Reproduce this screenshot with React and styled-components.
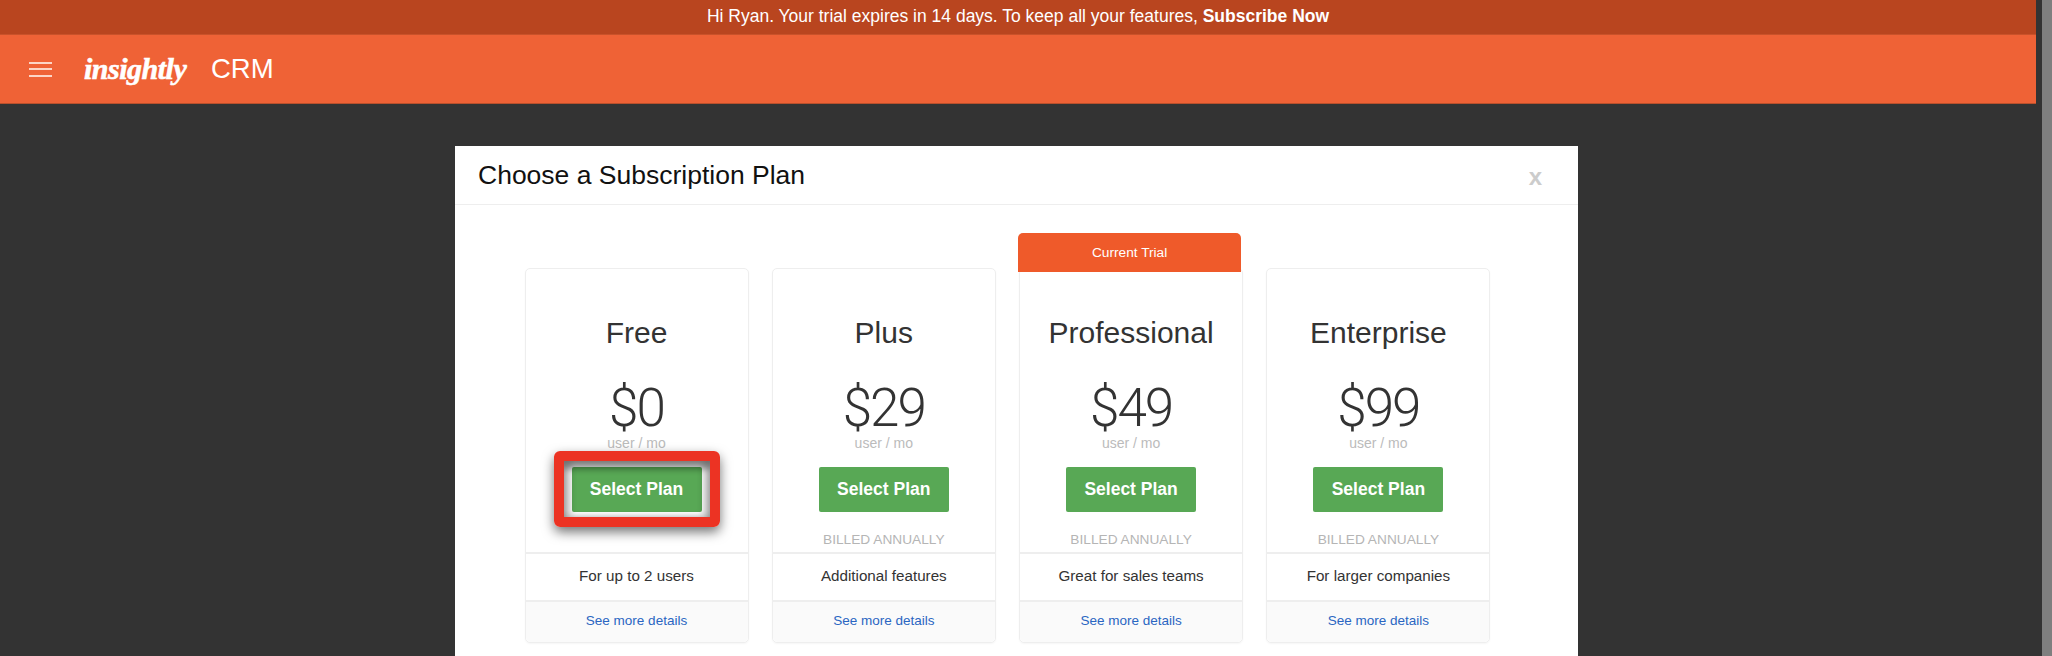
import React from "react";
import styled, { createGlobalStyle } from "styled-components";

const plans = [
  { name: "Free", price: "$0", blurb: "For up to 2 users", highlight: true },
  { name: "Plus", price: "$29", billed: true, blurb: "Additional features" },
  { name: "Professional", price: "$49", billed: true, blurb: "Great for sales teams", current: true },
  { name: "Enterprise", price: "$99", billed: true, blurb: "For larger companies" },
];

const App = () => {
  return (
    <Page>
      <GlobalStyle />
      <Main>
        <Banner>
          Hi Ryan. Your trial expires in 14 days. To keep all your features, <b>Subscribe Now</b>
        </Banner>
        <Nav>
          <Burger>
            <span />
            <span />
            <span />
          </Burger>
          <Logo>insightly</Logo>
          <Product>CRM</Product>
        </Nav>
        <Modal>
          <ModalHeader>
            <Title>Choose a Subscription Plan</Title>
            <Close>x</Close>
          </ModalHeader>
          <Plans>
            {plans.map((plan) => (
              <Card key={plan.name}>
                {plan.current && <Badge>Current Trial</Badge>}
                <CardTop>
                  <PlanName>{plan.name}</PlanName>
                  <Price>{plan.price}</Price>
                  <Unit>user / mo</Unit>
                  <ButtonWrap>
                    <SelectButton>Select Plan</SelectButton>
                    {plan.highlight && <Highlight />}
                  </ButtonWrap>
                  <Billed>{plan.billed ? "BILLED ANNUALLY" : ""}</Billed>
                </CardTop>
                <Blurb>{plan.blurb}</Blurb>
                <Details>See more details</Details>
              </Card>
            ))}
          </Plans>
        </Modal>
      </Main>
      <Gutter />
      <Scrollbar />
    </Page>
  );
};

export default App;

const GlobalStyle = createGlobalStyle`
  html, body {
    margin: 0;
    height: 100%;
    overflow: hidden;
    background: #333333;
    font-family: "Liberation Sans", Arial, sans-serif;
  }
`;

const Page = styled.div`
  display: flex;
  height: 656px;
  overflow: hidden;
`;

const Main = styled.div`
  flex: 1;
  min-width: 0;
`;

const Gutter = styled.div`
  width: 6px;
  background: #333333;
`;

const Scrollbar = styled.div`
  width: 10px;
  background: #7f7f7f;
`;

const Banner = styled.div`
  height: 35px;
  box-sizing: border-box;
  background: #b9451f;
  border-bottom: 1px solid #c9522a;
  color: #fff;
  font-size: 17.5px;
  line-height: 33px;
  text-align: center;
  white-space: nowrap;
`;

const Nav = styled.div`
  height: 69px;
  box-sizing: border-box;
  background: #ef6236;
  border-bottom: 1px solid #b9502c;
  display: flex;
  align-items: center;
  padding-left: 29px;
`;

const Burger = styled.div`
  width: 23px;
  display: flex;
  flex-direction: column;
  gap: 4.5px;

  span {
    height: 2px;
    background: #fcd5c6;
  }
`;

const Logo = styled.div`
  margin-left: 32px;
  width: 127px;
  color: #fff;
  font-family: "Liberation Serif", serif;
  font-style: italic;
  font-weight: 700;
  font-size: 30px;
  letter-spacing: -0.5px;
  -webkit-text-stroke: 0.6px #fff;
`;

const Product = styled.div`
  color: #fff;
  font-size: 27.5px;
`;

const Modal = styled.div`
  margin: 42px 0 0 455px;
  width: 1123px;
  background: #fff;
`;

const ModalHeader = styled.div`
  height: 58px;
  border-bottom: 1px solid #eeeeee;
  display: flex;
  align-items: center;
  justify-content: space-between;
  padding: 0 36px 0 23px;
`;

const Title = styled.div`
  font-size: 26.5px;
  color: #111;
`;

const Close = styled.div`
  font-size: 24px;
  font-weight: 700;
  color: #cccccc;
  margin-top: 4px;
`;

const Plans = styled.div`
  display: flex;
  gap: 23.3px;
  padding: 63px 0 40px 69.5px;
`;

const Card = styled.div`
  position: relative;
  width: 224px;
  height: 375px;
  box-sizing: border-box;
  border: 1px solid #eeeeee;
  border-radius: 5px;
  box-shadow: 0 1px 2px rgba(0, 0, 0, 0.04);
  display: flex;
  flex-direction: column;
`;

const Badge = styled.div`
  position: absolute;
  left: -2px;
  right: 1px;
  top: -36px;
  height: 39px;
  background: #ef5a2a;
  border-radius: 5px 5px 0 0;
  color: #fff;
  font-size: 13.7px;
  line-height: 39px;
  text-align: center;
`;

const CardTop = styled.div`
  height: 283px;
  box-sizing: border-box;
  padding-top: 44px;
  text-align: center;
`;

const PlanName = styled.div`
  font-size: 30px;
  line-height: 40px;
  color: #333;
`;

const Price = styled.div`
  margin-top: 30px;
  font-family: Roboto, "Liberation Sans", sans-serif;
  font-weight: 300;
  font-size: 53px;
  line-height: 50px;
  letter-spacing: -2px;
  color: #333;
`;

const Unit = styled.div`
  font-size: 14px;
  line-height: 20px;
  color: #bbbbbb;
`;

const ButtonWrap = styled.div`
  position: relative;
  width: 130px;
  margin: 14px auto 0;
`;

const SelectButton = styled.button`
  display: block;
  width: 130px;
  height: 45px;
  border: none;
  border-radius: 2px;
  background: #58a855;
  color: #fff;
  font-family: inherit;
  font-size: 17.5px;
  font-weight: 700;
`;

const Highlight = styled.div`
  position: absolute;
  inset: -16px -18px -15px -18px;
  border: 10px solid #ec3323;
  border-radius: 6px;
  box-shadow: 0 5px 12px rgba(0, 0, 0, 0.55), inset 0 8px 6px rgba(0, 0, 0, 0.4),
    inset 7px 0 6px rgba(0, 0, 0, 0.2), inset -7px 0 6px rgba(0, 0, 0, 0.2);
`;

const Billed = styled.div`
  margin-top: 18px;
  font-size: 13.7px;
  line-height: 20px;
  color: #b5b5b5;
`;

const Blurb = styled.div`
  height: 48px;
  box-sizing: border-box;
  border-top: 2px solid #eeeeee;
  font-size: 15.2px;
  line-height: 44px;
  text-align: center;
  color: #333;
`;

const Details = styled.div`
  flex: 1;
  border-top: 2px solid #eeeeee;
  border-radius: 0 0 5px 5px;
  background: #fafafa;
  font-size: 13.5px;
  line-height: 38px;
  text-align: center;
  color: #2a66c2;
`;
